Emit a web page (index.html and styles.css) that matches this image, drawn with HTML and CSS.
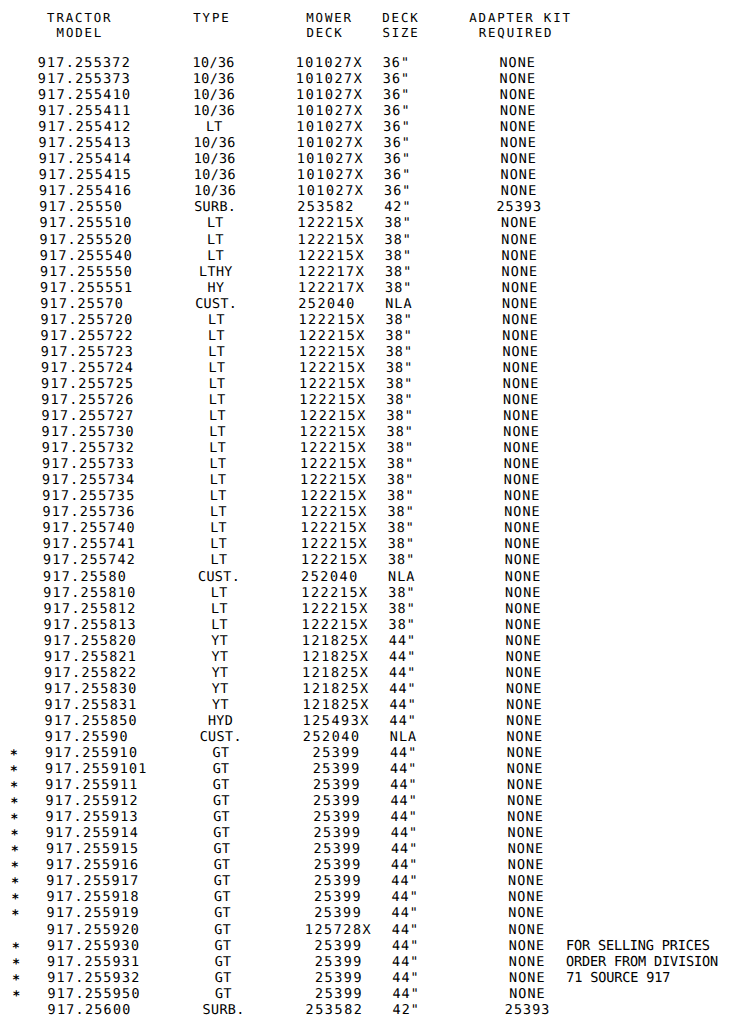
FILE: index.html
```html
<!DOCTYPE html>
<html lang="en">
<head>
<meta charset="utf-8">
<title>Tractor Mower Deck Adapter Kits</title>
<link rel="stylesheet" href="styles.css">
</head>
<body>
<div class="page">
  <div class="head">
    <div class="h-sp"></div>
    <div class="h-model">TRACTOR<br>MODEL</div>
    <div class="h-sp"></div>
    <div class="h-type">TYPE</div>
    <div class="h-sp"></div>
    <div class="h-deck">MOWER<br>DECK</div>
    <div class="h-size">DECK<br>SIZE</div>
    <div class="h-kit">ADAPTER KIT<br> REQUIRED</div>
  </div>
  <div class="tbl">
    <div class="r"><span class="s"></span><span class="m">917.255372</span><span class="t">10/36</span><span class="d">101027X</span><span class="z">36"</span><span class="k">NONE</span><span class="n"></span></div>
    <div class="r"><span class="s"></span><span class="m">917.255373</span><span class="t">10/36</span><span class="d">101027X</span><span class="z">36"</span><span class="k">NONE</span><span class="n"></span></div>
    <div class="r"><span class="s"></span><span class="m">917.255410</span><span class="t">10/36</span><span class="d">101027X</span><span class="z">36"</span><span class="k">NONE</span><span class="n"></span></div>
    <div class="r"><span class="s"></span><span class="m">917.255411</span><span class="t">10/36</span><span class="d">101027X</span><span class="z">36"</span><span class="k">NONE</span><span class="n"></span></div>
    <div class="r"><span class="s"></span><span class="m">917.255412</span><span class="t">LT</span><span class="d">101027X</span><span class="z">36"</span><span class="k">NONE</span><span class="n"></span></div>
    <div class="r"><span class="s"></span><span class="m">917.255413</span><span class="t">10/36</span><span class="d">101027X</span><span class="z">36"</span><span class="k">NONE</span><span class="n"></span></div>
    <div class="r"><span class="s"></span><span class="m">917.255414</span><span class="t">10/36</span><span class="d">101027X</span><span class="z">36"</span><span class="k">NONE</span><span class="n"></span></div>
    <div class="r"><span class="s"></span><span class="m">917.255415</span><span class="t">10/36</span><span class="d">101027X</span><span class="z">36"</span><span class="k">NONE</span><span class="n"></span></div>
    <div class="r"><span class="s"></span><span class="m">917.255416</span><span class="t">10/36</span><span class="d">101027X</span><span class="z">36"</span><span class="k">NONE</span><span class="n"></span></div>
    <div class="r"><span class="s"></span><span class="m">917.25550</span><span class="t">SURB.</span><span class="d">253582</span><span class="z">42"</span><span class="k">25393</span><span class="n"></span></div>
    <div class="r"><span class="s"></span><span class="m">917.255510</span><span class="t">LT</span><span class="d">122215X</span><span class="z">38"</span><span class="k">NONE</span><span class="n"></span></div>
    <div class="r"><span class="s"></span><span class="m">917.255520</span><span class="t">LT</span><span class="d">122215X</span><span class="z">38"</span><span class="k">NONE</span><span class="n"></span></div>
    <div class="r"><span class="s"></span><span class="m">917.255540</span><span class="t">LT</span><span class="d">122215X</span><span class="z">38"</span><span class="k">NONE</span><span class="n"></span></div>
    <div class="r"><span class="s"></span><span class="m">917.255550</span><span class="t">LTHY</span><span class="d">122217X</span><span class="z">38"</span><span class="k">NONE</span><span class="n"></span></div>
    <div class="r"><span class="s"></span><span class="m">917.255551</span><span class="t">HY</span><span class="d">122217X</span><span class="z">38"</span><span class="k">NONE</span><span class="n"></span></div>
    <div class="r"><span class="s"></span><span class="m">917.25570</span><span class="t">CUST.</span><span class="d">252040</span><span class="z">NLA</span><span class="k">NONE</span><span class="n"></span></div>
    <div class="r"><span class="s"></span><span class="m">917.255720</span><span class="t">LT</span><span class="d">122215X</span><span class="z">38"</span><span class="k">NONE</span><span class="n"></span></div>
    <div class="r"><span class="s"></span><span class="m">917.255722</span><span class="t">LT</span><span class="d">122215X</span><span class="z">38"</span><span class="k">NONE</span><span class="n"></span></div>
    <div class="r"><span class="s"></span><span class="m">917.255723</span><span class="t">LT</span><span class="d">122215X</span><span class="z">38"</span><span class="k">NONE</span><span class="n"></span></div>
    <div class="r"><span class="s"></span><span class="m">917.255724</span><span class="t">LT</span><span class="d">122215X</span><span class="z">38"</span><span class="k">NONE</span><span class="n"></span></div>
    <div class="r"><span class="s"></span><span class="m">917.255725</span><span class="t">LT</span><span class="d">122215X</span><span class="z">38"</span><span class="k">NONE</span><span class="n"></span></div>
    <div class="r"><span class="s"></span><span class="m">917.255726</span><span class="t">LT</span><span class="d">122215X</span><span class="z">38"</span><span class="k">NONE</span><span class="n"></span></div>
    <div class="r"><span class="s"></span><span class="m">917.255727</span><span class="t">LT</span><span class="d">122215X</span><span class="z">38"</span><span class="k">NONE</span><span class="n"></span></div>
    <div class="r"><span class="s"></span><span class="m">917.255730</span><span class="t">LT</span><span class="d">122215X</span><span class="z">38"</span><span class="k">NONE</span><span class="n"></span></div>
    <div class="r"><span class="s"></span><span class="m">917.255732</span><span class="t">LT</span><span class="d">122215X</span><span class="z">38"</span><span class="k">NONE</span><span class="n"></span></div>
    <div class="r"><span class="s"></span><span class="m">917.255733</span><span class="t">LT</span><span class="d">122215X</span><span class="z">38"</span><span class="k">NONE</span><span class="n"></span></div>
    <div class="r"><span class="s"></span><span class="m">917.255734</span><span class="t">LT</span><span class="d">122215X</span><span class="z">38"</span><span class="k">NONE</span><span class="n"></span></div>
    <div class="r"><span class="s"></span><span class="m">917.255735</span><span class="t">LT</span><span class="d">122215X</span><span class="z">38"</span><span class="k">NONE</span><span class="n"></span></div>
    <div class="r"><span class="s"></span><span class="m">917.255736</span><span class="t">LT</span><span class="d">122215X</span><span class="z">38"</span><span class="k">NONE</span><span class="n"></span></div>
    <div class="r"><span class="s"></span><span class="m">917.255740</span><span class="t">LT</span><span class="d">122215X</span><span class="z">38"</span><span class="k">NONE</span><span class="n"></span></div>
    <div class="r"><span class="s"></span><span class="m">917.255741</span><span class="t">LT</span><span class="d">122215X</span><span class="z">38"</span><span class="k">NONE</span><span class="n"></span></div>
    <div class="r"><span class="s"></span><span class="m">917.255742</span><span class="t">LT</span><span class="d">122215X</span><span class="z">38"</span><span class="k">NONE</span><span class="n"></span></div>
    <div class="r"><span class="s"></span><span class="m">917.25580</span><span class="t">CUST.</span><span class="d">252040</span><span class="z">NLA</span><span class="k">NONE</span><span class="n"></span></div>
    <div class="r"><span class="s"></span><span class="m">917.255810</span><span class="t">LT</span><span class="d">122215X</span><span class="z">38"</span><span class="k">NONE</span><span class="n"></span></div>
    <div class="r"><span class="s"></span><span class="m">917.255812</span><span class="t">LT</span><span class="d">122215X</span><span class="z">38"</span><span class="k">NONE</span><span class="n"></span></div>
    <div class="r"><span class="s"></span><span class="m">917.255813</span><span class="t">LT</span><span class="d">122215X</span><span class="z">38"</span><span class="k">NONE</span><span class="n"></span></div>
    <div class="r"><span class="s"></span><span class="m">917.255820</span><span class="t">YT</span><span class="d">121825X</span><span class="z">44"</span><span class="k">NONE</span><span class="n"></span></div>
    <div class="r"><span class="s"></span><span class="m">917.255821</span><span class="t">YT</span><span class="d">121825X</span><span class="z">44"</span><span class="k">NONE</span><span class="n"></span></div>
    <div class="r"><span class="s"></span><span class="m">917.255822</span><span class="t">YT</span><span class="d">121825X</span><span class="z">44"</span><span class="k">NONE</span><span class="n"></span></div>
    <div class="r"><span class="s"></span><span class="m">917.255830</span><span class="t">YT</span><span class="d">121825X</span><span class="z">44"</span><span class="k">NONE</span><span class="n"></span></div>
    <div class="r"><span class="s"></span><span class="m">917.255831</span><span class="t">YT</span><span class="d">121825X</span><span class="z">44"</span><span class="k">NONE</span><span class="n"></span></div>
    <div class="r"><span class="s"></span><span class="m">917.255850</span><span class="t">HYD</span><span class="d">125493X</span><span class="z">44"</span><span class="k">NONE</span><span class="n"></span></div>
    <div class="r"><span class="s"></span><span class="m">917.25590</span><span class="t">CUST.</span><span class="d">252040</span><span class="z">NLA</span><span class="k">NONE</span><span class="n"></span></div>
    <div class="r"><span class="s"><span class="star">*</span></span><span class="m">917.255910</span><span class="t">GT</span><span class="d"> 25399</span><span class="z">44"</span><span class="k">NONE</span><span class="n"></span></div>
    <div class="r"><span class="s"><span class="star">*</span></span><span class="m">917.2559101</span><span class="t">GT</span><span class="d"> 25399</span><span class="z">44"</span><span class="k">NONE</span><span class="n"></span></div>
    <div class="r"><span class="s"><span class="star">*</span></span><span class="m">917.255911</span><span class="t">GT</span><span class="d"> 25399</span><span class="z">44"</span><span class="k">NONE</span><span class="n"></span></div>
    <div class="r"><span class="s"><span class="star">*</span></span><span class="m">917.255912</span><span class="t">GT</span><span class="d"> 25399</span><span class="z">44"</span><span class="k">NONE</span><span class="n"></span></div>
    <div class="r"><span class="s"><span class="star">*</span></span><span class="m">917.255913</span><span class="t">GT</span><span class="d"> 25399</span><span class="z">44"</span><span class="k">NONE</span><span class="n"></span></div>
    <div class="r"><span class="s"><span class="star">*</span></span><span class="m">917.255914</span><span class="t">GT</span><span class="d"> 25399</span><span class="z">44"</span><span class="k">NONE</span><span class="n"></span></div>
    <div class="r"><span class="s"><span class="star">*</span></span><span class="m">917.255915</span><span class="t">GT</span><span class="d"> 25399</span><span class="z">44"</span><span class="k">NONE</span><span class="n"></span></div>
    <div class="r"><span class="s"><span class="star">*</span></span><span class="m">917.255916</span><span class="t">GT</span><span class="d"> 25399</span><span class="z">44"</span><span class="k">NONE</span><span class="n"></span></div>
    <div class="r"><span class="s"><span class="star">*</span></span><span class="m">917.255917</span><span class="t">GT</span><span class="d"> 25399</span><span class="z">44"</span><span class="k">NONE</span><span class="n"></span></div>
    <div class="r"><span class="s"><span class="star">*</span></span><span class="m">917.255918</span><span class="t">GT</span><span class="d"> 25399</span><span class="z">44"</span><span class="k">NONE</span><span class="n"></span></div>
    <div class="r"><span class="s"><span class="star">*</span></span><span class="m">917.255919</span><span class="t">GT</span><span class="d"> 25399</span><span class="z">44"</span><span class="k">NONE</span><span class="n"></span></div>
    <div class="r"><span class="s"></span><span class="m">917.255920</span><span class="t">GT</span><span class="d">125728X</span><span class="z">44"</span><span class="k">NONE</span><span class="n"></span></div>
    <div class="r"><span class="s"><span class="star">*</span></span><span class="m">917.255930</span><span class="t">GT</span><span class="d"> 25399</span><span class="z">44"</span><span class="k">NONE</span><span class="n">FOR SELLING PRICES</span></div>
    <div class="r"><span class="s"><span class="star">*</span></span><span class="m">917.255931</span><span class="t">GT</span><span class="d"> 25399</span><span class="z">44"</span><span class="k">NONE</span><span class="n">ORDER FROM DIVISION</span></div>
    <div class="r"><span class="s"><span class="star">*</span></span><span class="m">917.255932</span><span class="t">GT</span><span class="d"> 25399</span><span class="z">44"</span><span class="k">NONE</span><span class="n">71 SOURCE 917</span></div>
    <div class="r"><span class="s"><span class="star">*</span></span><span class="m">917.255950</span><span class="t">GT</span><span class="d"> 25399</span><span class="z">44"</span><span class="k">NONE</span><span class="n"></span></div>
    <div class="r"><span class="s"></span><span class="m">917.25600</span><span class="t">SURB.</span><span class="d">253582</span><span class="z">42"</span><span class="k">25393</span><span class="n"></span></div>
  </div>
</div>
</body>
</html>
```
FILE: styles.css
```css
html, body {
  margin: 0;
  padding: 0;
  background: #ffffff;
}

body {
  width: 736px;
  color: #000000;
  font-family: "DejaVu Sans Mono", "Liberation Mono", monospace;
}

.page {
  padding-top: 10px;
  transform: skewX(0.6deg);
  transform-origin: 0 0;
}

.head {
  display: grid;
  grid-template-columns: 37px 85px 71px 60px 53px 76px 87px 1fr;
  font-size: 12.5px;
  line-height: 15px;
  letter-spacing: 1.8px;
  white-space: pre;
}

.h-model {
  text-align: center;
}

.tbl {
  margin-top: 14px;
  display: flex;
  flex-direction: column;
}

.r {
  display: grid;
  grid-template-columns: 37px 143px 66px 136px 96px 78px 1fr;
  height: 16.05px;
  font-size: 13.5px;
  line-height: 16px;
  letter-spacing: 1px;
  white-space: pre;
}

.s {
  padding-left: 2px;
  font-size: 13px;
}

.star {
  font-weight: bold;
  vertical-align: -3px;
}

.m {
  letter-spacing: 1.2px;
}

.t {
  text-align: center;
  letter-spacing: 0.3px;
}

.d {
  padding-left: 49px;
  letter-spacing: 1.5px;
}

.k {
  text-align: center;
}

.n {
  font-size: 13.7px;
  letter-spacing: -0.25px;
}
```
